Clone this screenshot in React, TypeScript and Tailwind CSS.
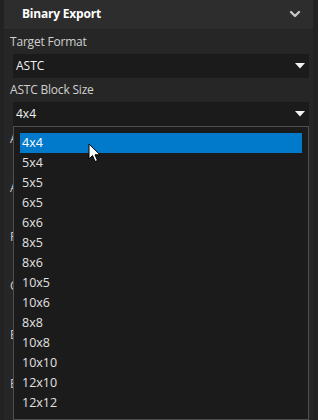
import { ChevronDown } from 'lucide-react'

const sizes = ['4x4', '5x4', '5x5', '6x5', '6x6', '8x5', '8x6', '10x5', '10x6', '8x8', '10x8', '10x10', '12x10', '12x12']

// rows behind the open list: only the first letter of each label peeks out
const hidden = ['A', 'A', 'F', 'C', 'E', 'E']

function Caret() {
  return (
    <svg width="10" height="6" viewBox="0 0 10 6" className="shrink-0">
      <path d="M0 0 H10 L5 5.5 Z" fill="#f2f2f2" />
    </svg>
  )
}

function Select({ value }: { value: string }) {
  return (
    <div className="ml-[9px] w-[296px] h-[24px] bg-[#1b1b1b] flex items-center justify-between pl-[3px] pr-[4px]">
      <span className="text-[12px] text-[#f0f0f0]">{value}</span>
      <Caret />
    </div>
  )
}

function Label({ text }: { text: string }) {
  return (
    <div className="h-[25px] flex items-center pl-[6px] text-[12px] text-[#d0d0d0] tracking-[-0.2px]">{text}</div>
  )
}

function Cursor() {
  return (
    <svg width="14" height="20" viewBox="0 0 14 20" className="absolute left-[88px] top-[143px]">
      <path d="M1 1 L1 16 L4.5 12.5 L7 18.5 L9.5 17.5 L7 11.8 L12 11.8 Z" fill="#ffffff" stroke="#000000" strokeWidth="1" strokeLinejoin="round" />
    </svg>
  )
}

export default function App() {
  return (
    <div
      className="relative w-[318px] h-[420px] overflow-hidden bg-[#222222]"
      style={{ fontFamily: '"Segoe UI", "Open Sans", "Noto Sans", sans-serif' }}
    >
      <div className="ml-[4px] w-[309px] h-full bg-[#262626] flex flex-col">
        <div className="h-[30px] bg-[#2d2d2d] border-b border-[#222222] flex items-center justify-between pl-[18px] pr-[10px]">
          <span className="text-[12px] font-bold text-white tracking-[-0.2px]">Binary Export</span>
          <ChevronDown size={16} strokeWidth={3.5} color="#c8c8c8" />
        </div>

        <Label text="Target Format" />
        <Select value="ASTC" />
        <Label text="ASTC Block Size" />
        <Select value="4x4" />

        {hidden.map((h, i) => (
          <div key={i} className="flex flex-col">
            <Label text={h} />
            <div className="h-[24px]" />
          </div>
        ))}
      </div>

      <div className="absolute left-[13px] top-[126px] w-[296px] h-[294px] bg-[#1b1b1b] border border-[#4f4f4f] pt-[6px] px-[6px]">
        {sizes.map((s, i) => (
          <div
            key={s}
            className={
              i === 0
                ? 'h-[20px] flex items-center pl-[2px] text-[12.5px] text-white bg-[#027acc]'
                : 'h-[20px] flex items-center pl-[2px] text-[12.5px] text-[#e2e2e2]'
            }
          >
            {s}
          </div>
        ))}
      </div>

      <Cursor />
    </div>
  )
}
